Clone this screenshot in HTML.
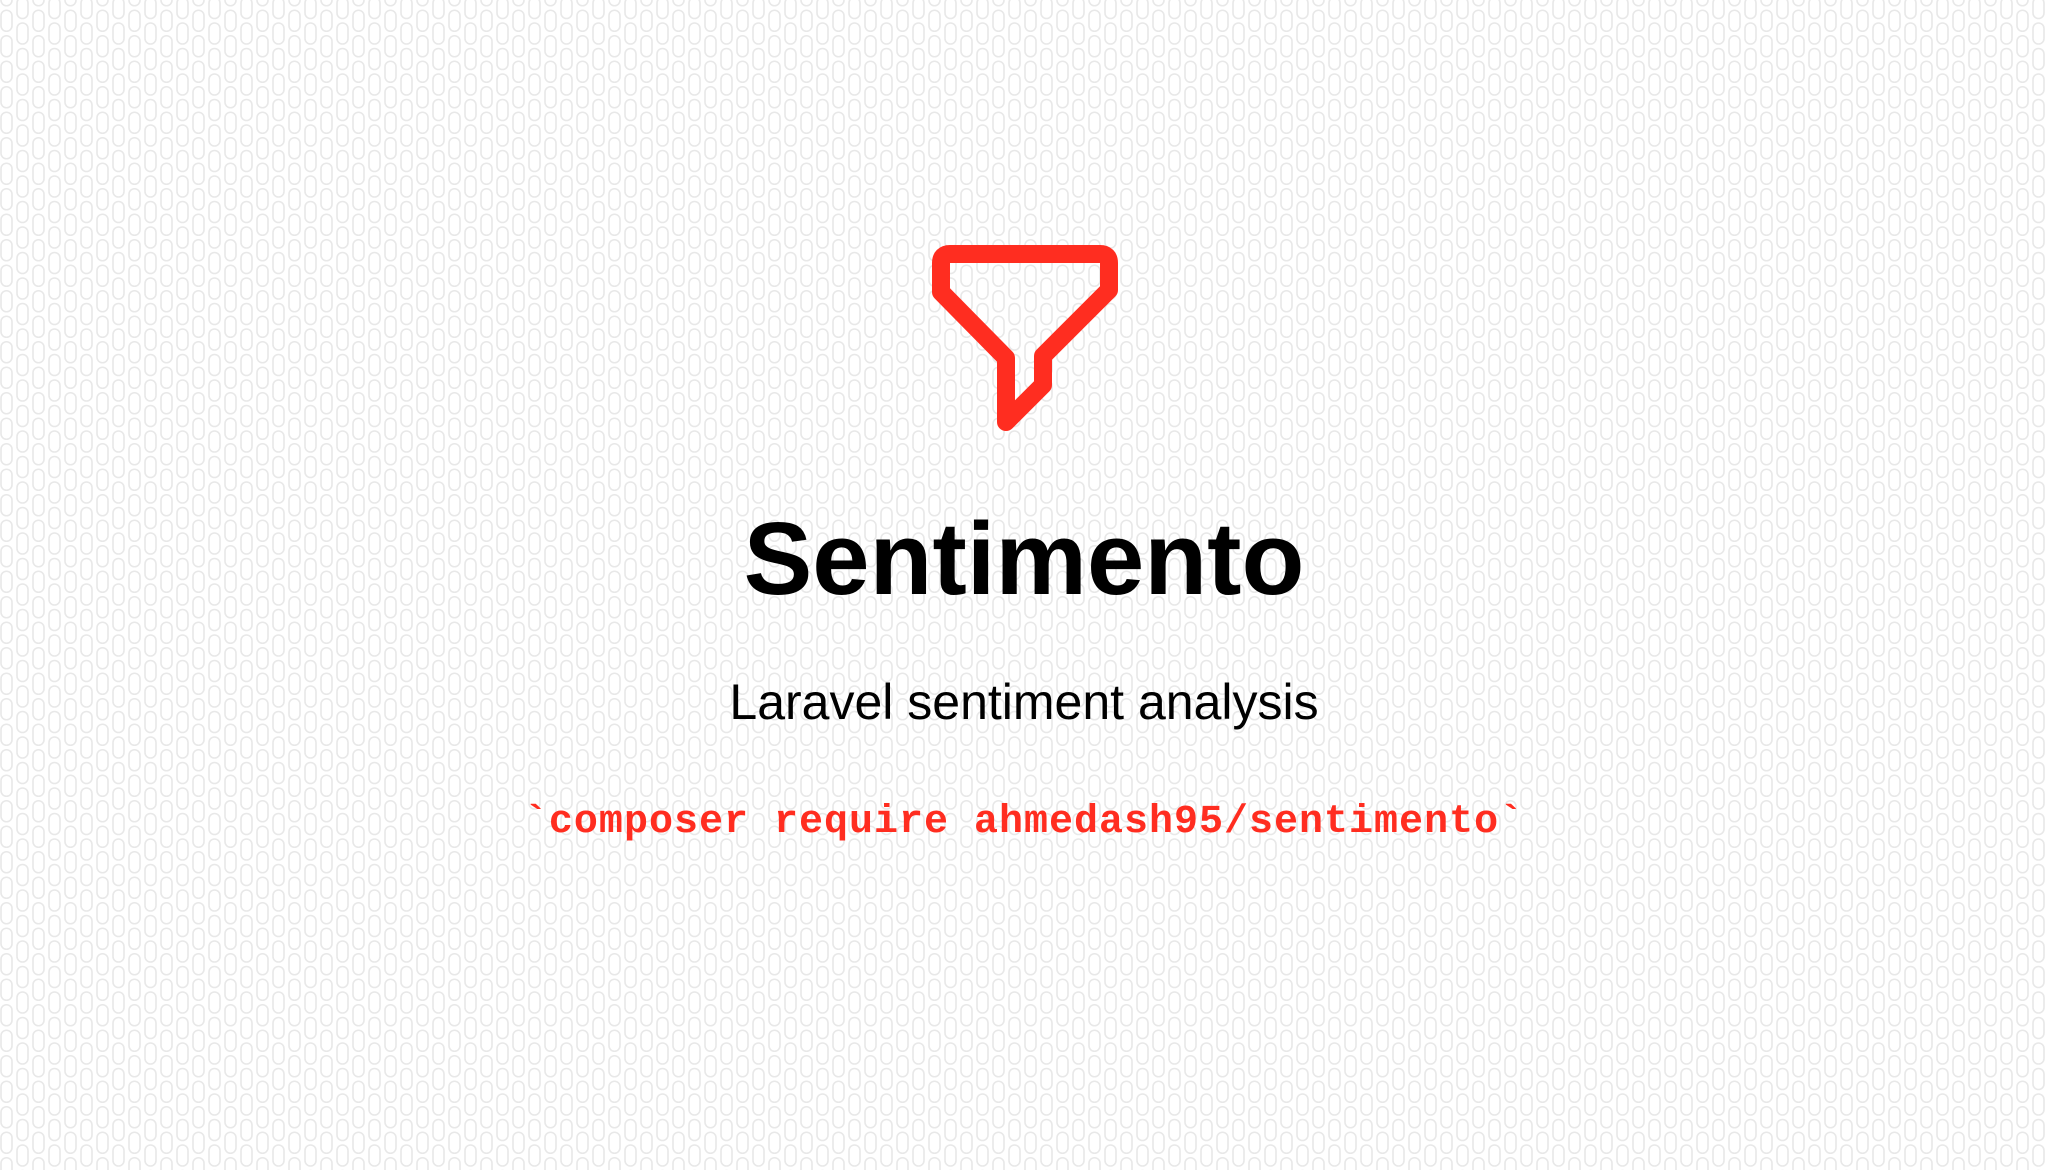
<!DOCTYPE html>
<html><head><meta charset="utf-8"><style>
html,body{margin:0;padding:0}
body{width:2048px;height:1170px;overflow:hidden;background:#fff;position:relative;font-family:"Liberation Sans",sans-serif}
svg.bg{position:absolute;left:0;top:0}
.t{position:absolute;left:0;width:2048px;text-align:center;white-space:nowrap}
</style></head><body>
<svg class="bg" width="2048" height="1170">
<defs><pattern id="p" x="0" y="-3.5" width="32" height="25.5" patternUnits="userSpaceOnUse">
<rect x="17" y="1" width="11" height="21" rx="5.5" fill="none" stroke="#e8e8e8" stroke-width="1.6"/>
<rect x="1" y="13.75" width="11" height="21" rx="5.5" fill="none" stroke="#e8e8e8" stroke-width="1.6"/>
<rect x="1" y="-11.75" width="11" height="21" rx="5.5" fill="none" stroke="#e8e8e8" stroke-width="1.6"/>
</pattern></defs>
<rect width="2048" height="1170" fill="url(#p)"/>
<path d="M950 254 H1100 Q1109 254 1109 263 V290 L1043 356 V385 L1006 422 V358 L941 292 V263 Q941 254 950 254 Z" fill="none" stroke="#ff2d20" stroke-width="18" stroke-linejoin="round" stroke-linecap="round"/>
</svg>
<div class="t" style="top:497px;font-size:103px;font-weight:bold;line-height:124px;color:#000;letter-spacing:0">Sentimento</div>
<div class="t" style="top:673px;font-size:50px;line-height:58px;color:#000">Laravel sentiment analysis</div>
<div class="t" style="top:799px;font-family:'Liberation Mono',monospace;font-weight:bold;font-size:40px;line-height:48px;color:#ff2d20;letter-spacing:1px">`composer require ahmedash95/sentimento`</div>
</body></html>
